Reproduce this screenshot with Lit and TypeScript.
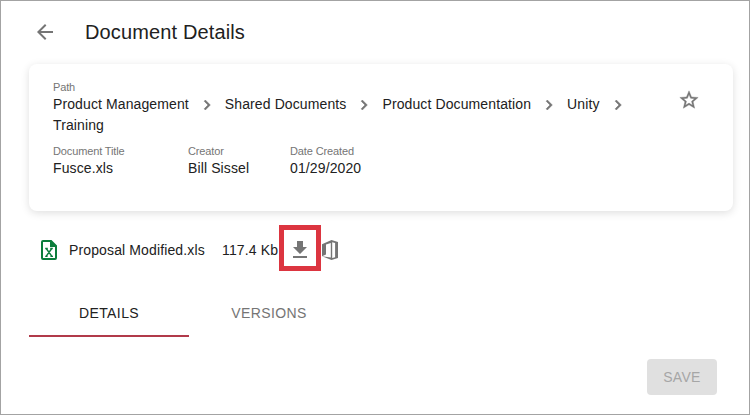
import { LitElement, html, css, svg } from "lit";
import { customElement } from "lit/decorators.js";

const chevron = html`<svg class="chev" viewBox="0 0 24 24" width="20" height="20">${svg`<path d="M10 6L8.59 7.41 13.17 12l-4.58 4.59L10 18l6-6z"/>`}</svg>`;

@customElement("app-root")
export class AppRoot extends LitElement {
  static styles = css`
    :host {
      display: block;
      box-sizing: border-box;
      height: 415px;
      border: 1px solid #a3a3a3;
      background: #fff;
      color: #212121;
      font: 14px/20px "Liberation Sans", Arial, sans-serif;
      letter-spacing: 0.13px;
      white-space: nowrap;
      overflow: hidden;
    }
    svg { display: block; flex: none; fill: #757575; }
    header { display: flex; align-items: center; box-sizing: border-box; height: 63px; padding: 0 0 2px 32px; }
    h1 { margin: 0 0 0 28px; font-size: 20px; font-weight: 400; line-height: 24px; letter-spacing: 0.13px; }
    .card {
      display: flex;
      justify-content: space-between;
      box-sizing: border-box;
      width: 704px;
      height: 147px;
      margin-left: 28px;
      padding: 16px 33px 0 24px;
      border-radius: 8px;
      box-shadow: 0 2px 8px rgba(0, 0, 0, 0.13);
    }
    .label { font-size: 11px; line-height: 14px; color: #757575; letter-spacing: -0.13px; }
    .path { display: flex; flex-wrap: wrap; width: 590px; column-gap: 8px; line-height: 21px; letter-spacing: 0.11px; }
    .chev { margin-top: 1px; stroke: #757575; stroke-width: 0.6; }
    .fields { display: flex; margin-top: 8px; letter-spacing: 0.12px; }
    .title { width: 135px; }
    .creator { width: 102px; }
    .star { margin-top: 9px; }
    .file { display: flex; align-items: center; height: 46px; margin-top: 14px; padding-left: 40px; }
    .excel, .name, .size, .office { margin-top: 4px; }
    .name { width: 153px; margin-left: 12px; }
    .size { width: 57px; }
    .mark {
      display: flex;
      align-items: center;
      justify-content: center;
      box-sizing: border-box;
      width: 42px;
      height: 46px;
      padding-top: 4px;
      border: 5px solid #dc3540;
    }
    .office { margin-left: 1px; }
    .excel { fill: none; }
    .tabs { display: flex; height: 48px; margin: 18px 0 0 28px; letter-spacing: 0.4px; }
    .tab {
      box-sizing: border-box;
      width: 160px;
      height: 48px;
      line-height: 49px;
      text-align: center;
      color: #757575;
    }
    .active { color: #212121; border-bottom: 2px solid #b13a4a; }
    .actions { display: flex; justify-content: flex-end; padding: 22px 32px 0 0; }
    button {
      width: 70px;
      height: 36px;
      padding: 0;
      border: 0;
      border-radius: 4px;
      background: #e0e0e0;
      color: #a6a6a6;
      font: inherit;
      letter-spacing: 0.3px;
    }
  `;

  render() {
    return html`
      <header>
        <svg viewBox="0 0 24 24" width="24" height="24"><path d="M20 11H7.83l5.59-5.59L12 4l-8 8 8 8 1.41-1.41L7.83 13H20v-2z"/></svg>
        <h1>Document Details</h1>
      </header>
      <section class="card">
        <div>
          <div class="label">Path</div>
          <div class="path">
            ${["Product Management", "Shared Documents", "Product Documentation", "Unity"].map(
              (p) => html`<span>${p}</span>${chevron}`
            )}
            <span>Training</span>
          </div>
          <div class="fields">
            <div class="title"><div class="label">Document Title</div>Fusce.xls</div>
            <div class="creator"><div class="label">Creator</div>Bill Sissel</div>
            <div><div class="label">Date Created</div>01/29/2020</div>
          </div>
        </div>
        <svg class="star" viewBox="0 0 24 24" width="22" height="22" stroke="#757575" stroke-width="0.4"><path d="M22 9.24l-7.19-.62L12 2 9.19 8.63 2 9.24l5.46 4.73L5.82 21 12 17.27 18.18 21l-1.63-7.03L22 9.24zM12 15.4l-3.76 2.27 1-4.28-3.32-2.88 4.38-.38L12 6.1l1.71 4.04 4.38.38-3.32 2.88 1 4.28L12 15.4z"/></svg>
      </section>
      <div class="file">
        <svg class="excel" viewBox="0 0 16 20" width="16" height="20">
          <path fill="#0b7d3b" fill-rule="evenodd" d="M2 0h8.5L16 5.5V18a2 2 0 0 1-2 2H2a2 2 0 0 1-2-2V2a2 2 0 0 1 2-2zM2 2v16h12V7H9V2z"/>
          <path stroke="#0b7d3b" stroke-width="1.4" d="M5.2 8.5l5.8 8M10.8 8.5l-5.8 8M4.2 8.5h2.6M9.2 8.5h2.6M4.2 16.4h2.4M9.4 16.4h2.6"/>
        </svg>
        <span class="name">Proposal Modified.xls</span>
        <span class="size">117.4 Kb</span>
        <div class="mark">
          <svg viewBox="0 0 24 24" width="24" height="24"><path d="M19 9h-4V3H9v6H5l7 7 7-7zM5 18v2h14v-2H5z"/></svg>
        </div>
        <svg class="office" viewBox="0 0 16 20" width="16" height="20"><path fill-rule="evenodd" d="M0 4.3L9.5 0 16 2v16l-6.5 2L0 16.2l8.8 1.2V3L4 4.5v10L0 16.2zM10.2 2.2v15.9l2.9-.9V3.1z"/></svg>
      </div>
      <nav class="tabs">
        <div class="tab active">DETAILS</div>
        <div class="tab">VERSIONS</div>
      </nav>
      <div class="actions"><button disabled>SAVE</button></div>
    `;
  }
}
